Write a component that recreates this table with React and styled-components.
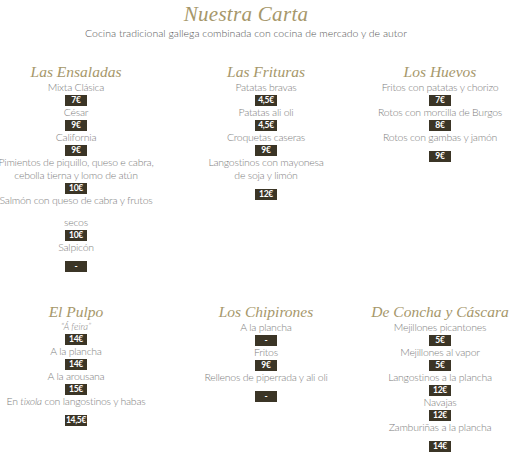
import React from 'react'
import styled, { createGlobalStyle } from 'styled-components'

const GlobalStyle = createGlobalStyle`
  body {
    margin: 0;
    background: #fff;
    font-family: "Lato", "Liberation Sans", sans-serif;
  }
`

const menu = [
  {
    title: 'Las Ensaladas',
    items: [
      { name: ['Mixta Clásica'], price: '7€' },
      { name: ['César'], price: '9€' },
      { name: ['California'], price: '9€' },
      { name: ['Pimientos de piquillo, queso e cabra,', 'cebolla tierna y lomo de atún'], price: '10€' },
      { name: ['Salmón con queso de cabra y frutos', 'secos'], price: '10€', loose: true },
      { name: ['Salpicón'], price: '-' },
    ],
  },
  {
    title: 'Las Frituras',
    items: [
      { name: ['Patatas bravas'], price: '4,5€' },
      { name: ['Patatas ali oli'], price: '4,5€' },
      { name: ['Croquetas caseras'], price: '9€' },
      { name: ['Langostinos con mayonesa', 'de soja y limón'], price: '12€' },
    ],
  },
  {
    title: 'Los Huevos',
    items: [
      { name: ['Fritos con patatas y chorizo'], price: '7€' },
      { name: ['Rotos con morcilla de Burgos'], price: '8€' },
      { name: ['Rotos con gambas y jamón'], price: '9€' },
    ],
  },
  {
    title: 'El Pulpo',
    note: '“Á feira”',
    items: [
      { name: [], price: '14€' },
      { name: ['A la plancha'], price: '14€' },
      { name: ['A la arousana'], price: '15€' },
      { name: [<>En <i>tixola</i> con langostinos y habas</>], price: '14,5€' },
    ],
  },
  {
    title: 'Los Chipirones',
    items: [
      { name: ['A la plancha'], price: '-' },
      { name: ['Fritos'], price: '9€' },
      { name: ['Rellenos de piperrada y ali oli'], price: '-' },
    ],
  },
  {
    title: 'De Concha y Cáscara',
    items: [
      { name: ['Mejillones picantones'], price: '5€' },
      { name: ['Mejillones al vapor'], price: '5€' },
      { name: ['Langostinos a la plancha'], price: '12€' },
      { name: ['Navajas'], price: '12€' },
      { name: ['Zamburiñas a la plancha'], price: '14€' },
    ],
  },
]

const Page = styled.div`
  width: 512px;
  padding-top: 2px;
`

const Header = styled.header`
  width: 492px;
  text-align: center;
`

const Title = styled.h1`
  margin: 0;
  font-family: "Liberation Serif", serif;
  font-style: italic;
  font-weight: normal;
  font-size: 21px;
  line-height: 24px;
  letter-spacing: 0.3px;
  color: #a6976a;
`

const Subtitle = styled.p`
  margin: 0;
  font-size: 10.5px;
  line-height: 14px;
  font-weight: 300;
  color: #555;
`

const Grid = styled.div`
  display: grid;
  grid-template-columns: 152px 228px 120px;
  row-gap: 31px;
  margin-top: 23px;
`

const Section = styled.section`
  display: flex;
  flex-direction: column;
  align-items: center;
`

const Heading = styled.h2`
  margin: 0;
  font-family: "Liberation Serif", serif;
  font-style: italic;
  font-weight: normal;
  font-size: 15.5px;
  line-height: 18px;
  color: #a6976a;
  white-space: nowrap;
`

const Note = styled.div`
  font-style: italic;
  font-size: 9.5px;
  line-height: 12px;
  font-weight: 300;
  color: #888;
`

const Line = styled.div`
  font-size: 10.5px;
  line-height: 13px;
  font-weight: 300;
  letter-spacing: -0.25px;
  color: #7e7e7e;
  white-space: nowrap;
  margin-top: ${p => (p.$loose ? '9px' : '0')};
`

const Price = styled.div`
  width: 22px;
  height: 11px;
  margin-top: ${p => (p.$last ? '7px' : '1px')};
  background: #3b3526;
  color: #fff;
  font-size: 8.5px;
  font-weight: bold;
  line-height: 11px;
  text-align: center;
  letter-spacing: -0.3px;
`

function MenuSection({ section }) {
  return (
    <Section>
      <Heading>{section.title}</Heading>
      {section.note && <Note>{section.note}</Note>}
      {section.items.map((item, i) => (
        <React.Fragment key={i}>
          {item.name.map((n, j) => (
            <Line key={j} $loose={item.loose && j > 0}>{n}</Line>
          ))}
          <Price $last={i === section.items.length - 1}>{item.price}</Price>
        </React.Fragment>
      ))}
    </Section>
  )
}

export default function App() {
  return (
    <Page>
      <GlobalStyle />
      <Header>
        <Title>Nuestra Carta</Title>
        <Subtitle>Cocina tradicional gallega combinada con cocina de mercado y de autor</Subtitle>
      </Header>
      <Grid>
        {menu.map((s, i) => <MenuSection key={i} section={s} />)}
      </Grid>
    </Page>
  )
}
